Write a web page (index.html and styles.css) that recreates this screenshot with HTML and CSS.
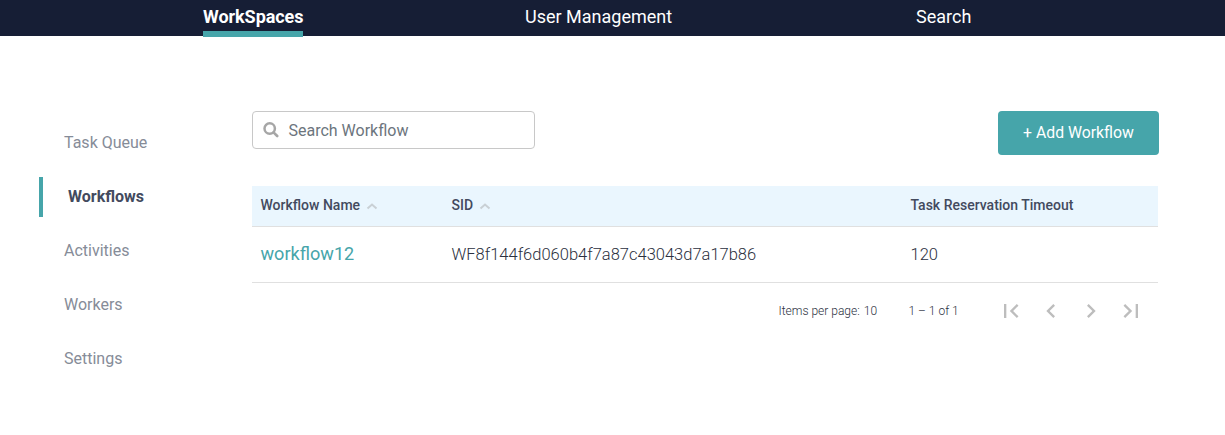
FILE: index.html
```html
<!DOCTYPE html>
<html lang="en">
<head>
<meta charset="utf-8">
<title>Workflows</title>
<link rel="stylesheet" href="styles.css">
</head>
<body>
<header class="topbar">
  <a class="tab tab-work active">WorkSpaces</a>
  <a class="tab tab-users">User Management</a>
  <a class="tab tab-search">Search</a>
</header>
<div class="page">
  <nav class="side">
    <a class="side-link">Task Queue</a>
    <a class="side-link current">Workflows</a>
    <a class="side-link">Activities</a>
    <a class="side-link">Workers</a>
    <a class="side-link">Settings</a>
  </nav>
  <main class="content">
    <div class="toolbar">
      <div class="search">
        <svg class="search-icon" viewBox="0 0 16 16"><circle cx="6.700" cy="6.500" r="5.200" fill="none" stroke="#a6a6a6" stroke-width="2.500"/><path d="M10.500 10.300l3.700 3.700" stroke="#a6a6a6" stroke-width="2.600" stroke-linecap="round"/></svg>
        <span>Search Workflow</span>
      </div>
      <button class="add">+ Add Workflow</button>
    </div>
    <div class="row head">
      <div class="cell">Workflow Name <svg class="caret" viewBox="0 0 12 7"><path d="M1.500 5.500L6 1.500l4.500 4" fill="none" stroke="#c9d0d5" stroke-width="2"/></svg></div>
      <div class="cell">SID <svg class="caret" viewBox="0 0 12 7"><path d="M1.500 5.500L6 1.500l4.500 4" fill="none" stroke="#c9d0d5" stroke-width="2"/></svg></div>
      <div class="cell">Task Reservation Timeout</div>
    </div>
    <div class="row data">
      <div class="cell name">workflow12</div>
      <div class="cell">WF8f144f6d060b4f7a87c43043d7a17b86</div>
      <div class="cell">120</div>
    </div>
    <div class="pager">
      <span class="per-page">Items per page: &#8202;10</span>
      <span class="range">1 – 1 of 1</span>
      <svg class="page-icon" viewBox="0 0 24 24"><path d="M18.410 16.590L13.820 12l4.590-4.590L17 6l-6 6 6 6zM6 6h2v12H6z"/></svg>
      <svg class="page-icon" viewBox="0 0 24 24"><path d="M15.410 7.410L14 6l-6 6 6 6 1.410-1.410L10.830 12z"/></svg>
      <svg class="page-icon" viewBox="0 0 24 24"><path d="M10 6L8.590 7.410 13.170 12l-4.580 4.590L10 18l6-6z"/></svg>
      <svg class="page-icon" viewBox="0 0 24 24"><path d="M5.590 7.410L10.180 12l-4.590 4.590L7 18l6-6-6-6zM16 6h2v12h-2z"/></svg>
    </div>
  </main>
</div>
</body>
</html>
```
FILE: styles.css
```css
* { box-sizing: border-box; }
body { margin: 0; background: #fff; font-family: Roboto, sans-serif; color: #434a5e; }
.topbar { display: flex; height: 36px; padding-left: 203px; background: #161e35; }
.tab { height: 37px; padding-top: 6px; font-size: 18px; line-height: 21px; font-weight: 400; color: #fff; white-space: nowrap; }
.active { font-weight: 700; letter-spacing: -0.06px; }
.tab-work { width: 100px; margin-right: 222px; border-bottom: 6px solid #46a5aa; }
.tab-users { width: 147px; margin-right: 244px; }
.page { display: flex; }
.side { width: 213px; margin-right: 39px; padding-top: 87px; padding-left: 39px; }
.side-link { display: block; height: 40px; margin-bottom: 14px; padding-left: 25px; line-height: 39px; font-size: 16px; color: #868c98; }
.current { border-left: 4px solid #46a5aa; font-weight: 700; color: #434a5e; }
.content { width: 906px; padding-top: 75px; }
.toolbar { display: flex; justify-content: space-between; width: 907px; height: 75px; }
.search { display: flex; align-items: center; width: 283px; height: 38px; padding-left: 10px; border: 1px solid #c8c8c8; border-radius: 4px; font-size: 16px; color: #6c757d; }
.search-icon { width: 16px; height: 16px; margin-right: 9.5px; }
.add { width: 161px; height: 44px; padding: 0 0 2px; border: 0; border-radius: 4px; background: #46a5aa; color: #fff; font: 400 15.8px Roboto, sans-serif; }
.row { display: grid; grid-template-columns: 191px 459px 256px; align-items: center; border-bottom: 1px solid #e0e0e0; }
.cell { padding-left: 8.5px; white-space: nowrap; }
.head { height: 41px; padding-bottom: 2px; background: #eaf6fe; font-size: 14px; font-weight: 500; color: #434a5e; }
.caret { width: 12px; height: 7px; margin-left: 2.5px; }
.data { height: 56px; font-size: 16.5px; font-weight: 300; color: #2b3040; }
.name { padding-bottom: 2px; font-size: 18.1px; font-weight: 400; color: #46a5aa; }
.pager { display: flex; align-items: center; height: 56px; padding-left: 526.5px; font-size: 12px; font-weight: 300; color: #2b3040; }
.per-page { width: 130px; }
.range { width: 88.5px; }
.page-icon { width: 28px; height: 28px; margin-right: 12px; flex: none; fill: #bdbdbd; }
```
